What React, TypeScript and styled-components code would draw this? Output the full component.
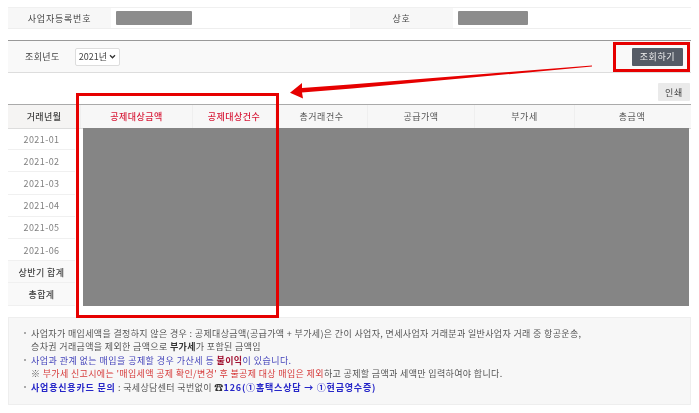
import React from "react";
import styled, { createGlobalStyle } from "styled-components";

const months = ["2021-01", "2021-02", "2021-03", "2021-04", "2021-05", "2021-06"];
const totals = ["상반기 합계", "총합계"];
const columns = [
  { label: "공제대상금액", width: 112, hot: true },
  { label: "공제대상건수", width: 83, hot: true },
  { label: "총거래건수", width: 92 },
  { label: "공급가액", width: 107 },
  { label: "부가세", width: 100 },
  { label: "총금액", width: 115 },
];

const App: React.FC = () => {
  return (
    <Page>
      <GlobalStyle />
      <InfoTable>
        <InfoLabel>사업자등록번호</InfoLabel>
        <InfoValue>
          <Redacted $width={76} />
        </InfoValue>
        <InfoLabel>상호</InfoLabel>
        <InfoValue>
          <Redacted $width={70} />
        </InfoValue>
      </InfoTable>

      <SearchBar>
        <SearchLeft>
          <SearchLabel>조회년도</SearchLabel>
          <YearSelect defaultValue="2021">
            <option value="2021">2021년</option>
          </YearSelect>
        </SearchLeft>
        <SearchButton>조회하기</SearchButton>
      </SearchBar>

      <PrintRow>
        <PrintButton>인쇄</PrintButton>
      </PrintRow>

      <ResultTable>
        <HeadRow>
          <FirstHead>거래년월</FirstHead>
          {columns.map((col) => (
            <HeadCell key={col.label} $width={col.width} $hot={col.hot}>
              {col.label}
            </HeadCell>
          ))}
        </HeadRow>
        <BodyArea>
          <LabelColumn>
            {months.map((m) => (
              <MonthCell key={m}>{m}</MonthCell>
            ))}
            {totals.map((t) => (
              <TotalCell key={t}>{t}</TotalCell>
            ))}
          </LabelColumn>
          <GrayBlock />
        </BodyArea>
      </ResultTable>

      <Notes>
        <NoteBlock>
          <NoteLine $bullet>
            사업자가 매입세액을 결정하지 않은 경우 : 공제대상금액(공급가액 + 부가세)은 간이 사업자, 면세사업자 거래분과 일반사업자 거래 중 항공운송,
          </NoteLine>
          <NoteLine>
            승차권 거래금액을 제외한 금액으로 <b>부가세</b>가 포함된 금액임
          </NoteLine>
        </NoteBlock>
        <NoteBlock>
          <NoteLine $bullet>
            <Blue>사업과 관계 없는 매입을 공제할 경우 가산세 등 </Blue>
            <DarkRed>불이익</DarkRed>
            <Blue>이 있습니다.</Blue>
          </NoteLine>
          <NoteLine>
            ※ <Red>부가세 신고시에는 '매입세액 공제 확인/변경' 후 불공제 대상 매입은 제외</Red>하고 공제할 금액과 세액만 입력하여야 합니다.
          </NoteLine>
        </NoteBlock>
        <NoteBlock>
          <NoteLine $bullet>
            <BoldBlue>사업용신용카드 문의</BoldBlue> : 국세상담센터 국번없이 <b>☎</b>
            <BoldBlue>126(①홈택스상담 → ①현금영수증)</BoldBlue>
          </NoteLine>
        </NoteBlock>
      </Notes>

      <RedBox $left={613} $top={42} $width={77} $height={30} />
      <RedBox $left={76} $top={93} $width={203} $height={225} />
      <ArrowSvg viewBox="0 0 699 413" width="699" height="413">
        <polygon points="592,65.5 592,66.5 352,88.5 302,92.5 303,98.5 290,92.7 302,83 302,88 350,84.5" fill="#e60000" />
      </ArrowSvg>
    </Page>
  );
};

export default App;

// Styled Components
const chevron =
  "data:image/svg+xml,%3Csvg xmlns='http://www.w3.org/2000/svg' viewBox='0 0 8 6'%3E%3Cpath d='M1 1.5l3 3 3-3' fill='none' stroke='%23333' stroke-width='1.6'/%3E%3C/svg%3E";

const GlobalStyle = createGlobalStyle`
  html, body {
    margin: 0;
    padding: 0;
    background: #fff;
  }
  body {
    font-family: "Noto Sans CJK KR", "Liberation Sans", sans-serif;
    overflow: hidden;
  }
`;

const Page = styled.div`
  position: relative;
  width: 699px;
  height: 413px;
  box-sizing: border-box;
  padding: 7px 8px 0;
  overflow: hidden;
  color: #555;
  font-size: 9px;
  filter: blur(0.45px);
`;

const InfoTable = styled.div`
  display: grid;
  grid-template-columns: 103px 239px 103px 238px;
  box-sizing: border-box;
  height: 22px;
  border-bottom: 1px solid #eee;
  border-top: 1px solid #f0f0f0;
`;

const InfoLabel = styled.div`
  display: flex;
  align-items: center;
  justify-content: center;
  background: #f7f7f7;
  color: #444;
  letter-spacing: 0.8px;
`;

const InfoValue = styled.div`
  display: flex;
  align-items: center;
  padding-left: 5px;
`;

const Redacted = styled.div<{ $width: number }>`
  width: ${(p) => p.$width}px;
  height: 14px;
  border-radius: 1px;
  background: #8c8c8c;
`;

const SearchBar = styled.div`
  display: flex;
  align-items: center;
  justify-content: space-between;
  box-sizing: border-box;
  height: 33px;
  margin-top: 11px;
  padding: 0 8px 0 17px;
  background: #f9f9f9;
  border-top: 1px solid #999;
  border-bottom: 1px solid #ddd;
`;

const SearchLeft = styled.div`
  display: flex;
  align-items: center;
  gap: 15px;
`;

const SearchLabel = styled.span`
  letter-spacing: 0.4px;
  color: #444;
`;

const YearSelect = styled.select`
  appearance: none;
  box-sizing: border-box;
  width: 45px;
  height: 18px;
  padding: 0 0 0 3px;
  font-family: "Noto Sans CJK KR", "Liberation Sans", sans-serif;
  font-size: 9px;
  color: #444;
  background: #fff url("${chevron}") no-repeat right 3px center / 7px 5px;
  border: 1px solid #ddd;
  border-radius: 2px;
`;

const SearchButton = styled.button`
  width: 51px;
  height: 18px;
  padding: 0;
  border: 0;
  border-radius: 1px;
  background: #555b66;
  color: #f0f0f0;
  font-family: inherit;
  font-size: 9px;
  letter-spacing: 0.6px;
`;

const PrintRow = styled.div`
  display: flex;
  justify-content: flex-end;
  height: 28px;
  align-items: flex-end;
  padding-right: 1px;
`;

const PrintButton = styled.button`
  width: 32px;
  height: 18px;
  padding: 0;
  border: 0;
  border-radius: 1px;
  background: #eaeaea;
  color: #444;
  font-family: inherit;
  font-size: 9px;
  letter-spacing: 0.6px;
`;

const ResultTable = styled.div`
  margin-top: 3px;
  border-top: 1px solid #aaa;
`;

const HeadRow = styled.div`
  display: flex;
  height: 23px;
  background: #f7f7f7;
`;

const FirstHead = styled.div`
  display: flex;
  align-items: center;
  justify-content: center;
  width: 72px;
  color: #444;
  font-weight: 500;
  letter-spacing: 0.4px;
  background: #f5f4f3;
`;

const HeadCell = styled.div<{ $width: number; $hot?: boolean }>`
  display: flex;
  align-items: center;
  justify-content: center;
  width: ${(p) => p.$width}px;
  border-left: 1px solid #efefef;
  box-sizing: border-box;
  letter-spacing: 0.5px;
  color: ${(p) => (p.$hot ? "#d81c3a" : "#555")};
  font-weight: ${(p) => (p.$hot ? 500 : 400)};
`;

const BodyArea = styled.div`
  display: flex;
  box-shadow: inset 0 1px 0 #ddd;
`;

const LabelColumn = styled.div`
  width: 75px;
  flex: none;
`;

const MonthCell = styled.div`
  display: flex;
  align-items: center;
  justify-content: center;
  box-sizing: border-box;
  width: 67px;
  height: 22.2px;
  padding-top: 1px;
  border-bottom: 1px solid #f0f0f0;
  color: #808080;
  letter-spacing: 0.4px;
`;

const TotalCell = styled(MonthCell)`
  background: #f9f9f9;
  color: #444;
  font-weight: 500;
  white-space: nowrap;
`;

const GrayBlock = styled.div`
  width: 606px;
  background: #858585;
`;

const Notes = styled.div`
  box-sizing: border-box;
  height: 88px;
  margin-top: 11.4px;
  padding: 9.5px 13px 0 14px;
  background: #f7f7f7;
  border: 1px solid #eee;
  color: #555;
  font-size: 9px;
  letter-spacing: 0.35px;
  line-height: 13px;
`;

const NoteBlock = styled.div`
  margin-bottom: 1px;
`;

const NoteLine = styled.div<{ $bullet?: boolean }>`
  position: relative;
  padding-left: 8px;
  white-space: nowrap;

  ${(p) =>
    p.$bullet &&
    `&::before {
      content: "";
      position: absolute;
      left: 1px;
      top: 5px;
      width: 2px;
      height: 2px;
      background: #aaa;
    }`}

  b {
    color: #333;
  }
`;

const Blue = styled.span`
  color: #4444bb;
  letter-spacing: 0.45px;
`;

const BoldBlue = styled.b`
  && {
    color: #2626c8;
    letter-spacing: 0.8px;
  }
`;

const DarkRed = styled.b`
  && {
    color: #a01030;
  }
`;

const Red = styled.span`
  color: #d63a3a;
`;

const RedBox = styled.div<{ $left: number; $top: number; $width: number; $height: number }>`
  position: absolute;
  box-sizing: border-box;
  left: ${(p) => p.$left}px;
  top: ${(p) => p.$top}px;
  width: ${(p) => p.$width}px;
  height: ${(p) => p.$height}px;
  border: 3px solid #e60000;
`;

const ArrowSvg = styled.svg`
  position: absolute;
  left: 0;
  top: 0;
  pointer-events: none;
`;
